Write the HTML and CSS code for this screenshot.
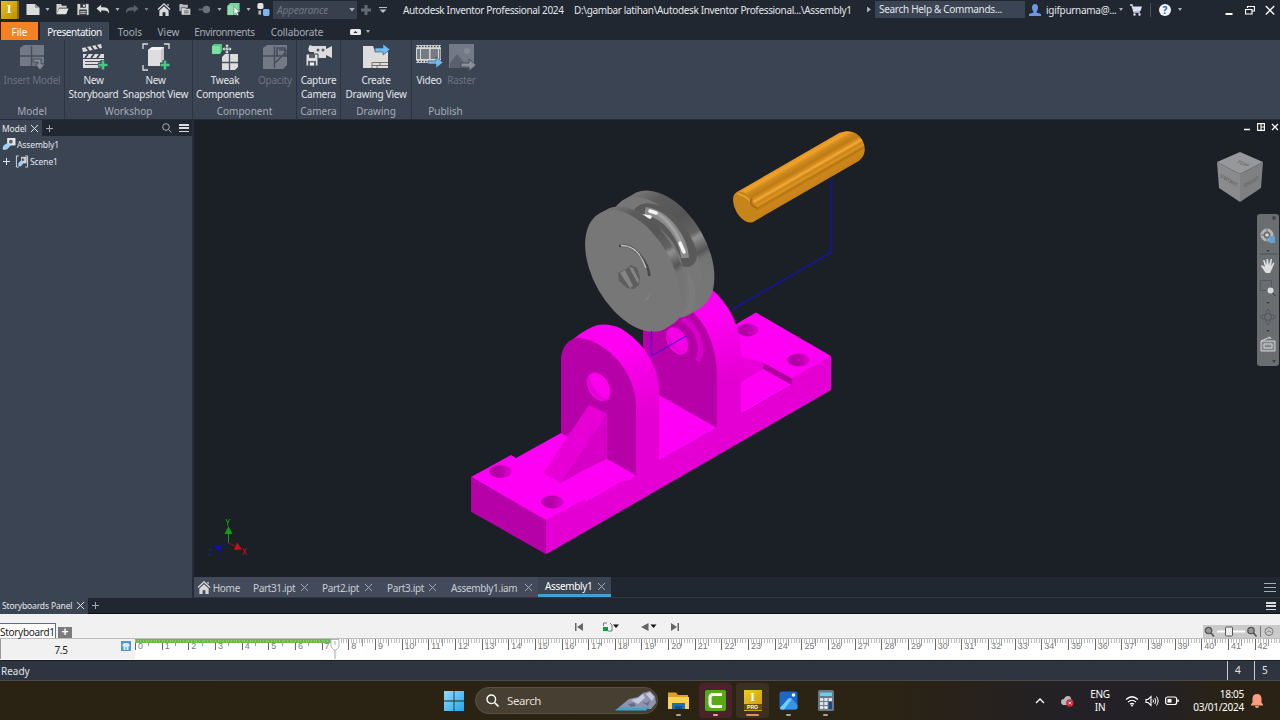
FILE: index.html
```html
<!DOCTYPE html>
<html lang="en">
<head>
    <meta charset="UTF-8">
    <meta name="viewport" content="width=device-width, initial-scale=1.0">
    <title>Autodesk Inventor Professional 2024</title>
    <link rel="stylesheet" href="styles.css">
</head>
<body>
    <!-- Title bar -->
    <header class="titlebar">
        <div class="logo">I</div>
        <div class="qat">
            <svg class="icon" viewBox="0 0 14 14"><path d="M0 1h9l5 4v8H0z" fill="#dcdcdc"/><path d="M9 1v4h5z" fill="#8b9099"/></svg>
            <i class="caret"></i>
            <svg class="icon" viewBox="0 0 14 14"><path d="M1 12V1h5l1 2h5v2H4z" fill="#cfcfcf"/><path d="M4 6h10l-2.500 6H1z" fill="#e2e2e2"/></svg>
            <svg class="icon wide" viewBox="0 0 14 14"><path d="M1 1h12v12H1z" fill="#d8d8d8"/><path d="M4 1h6v4H4zM3 7h8v6H3z" fill="#333a45"/><path d="M7 2h2v2H7zM4 8.500h6v1H4zm0 2h6v1H4z" fill="#e4e4e4"/></svg>
            <svg class="icon wide" viewBox="0 0 14 14"><path d="M0 6l5-4v2.500h3c4 0 6 3 5.500 7C12.500 9 11 8 8 8H5v2.500z" fill="#dcdcdc"/></svg>
            <i class="caret"></i>
            <svg class="icon" viewBox="0 0 14 14"><path d="M14 6L9 2v2.500H6c-4 0-6 3-5.500 7C1.500 9 3 8 6 8h3v2.500z" fill="#59606b"/></svg>
            <i class="caret dim"></i>
            <svg class="icon wide" viewBox="0 0 14 14"><path d="M7 0l7 6.500-1 1L7 2 1 7.500l-1-1zM10.500 1H12v2.500l-1.500-1z" fill="#d8d8d8"/><path d="M2 8l5-4.500L12 8v6H8.500v-4h-3v4H2z" fill="#d8d8d8"/></svg>
            <svg class="icon wide" viewBox="0 0 14 14"><path d="M1 1h3l1 1h5v3H4v4H1z" fill="#b9bdc2"/><path d="M3 5h4l1 1h5v7H3z" fill="#d3d3d3" stroke="#202731" stroke-width=".5"/><path d="M6 8.500h5M6 10.500h5" stroke="#555b66"/></svg>
            <svg class="icon wide" viewBox="0 0 14 14"><circle cx="8.500" cy="7" r="4" fill="#6b717b"/><path d="M0 7h5" stroke="#5a616c" stroke-width="2"/></svg>
            <i class="caret"></i>
            <svg class="icon" viewBox="0 0 14 14"><path d="M0 3l3-3h10v9l-3 4H0z" fill="#74d69a"/><path d="M0 3h10v10H0z" fill="#8de0ac"/><path d="M7 3.500v9l2-2 1.500 3 1.500-.7-1.500-3H13z" fill="#fff" stroke="#39414d" stroke-width=".5"/></svg>
            <i class="caret"></i>
            <svg class="icon" viewBox="0 0 14 14"><rect x="1" y="0" width="6.500" height="6.500" rx="2" fill="#e4e4e4"/><rect x="7" y="6.500" width="7" height="7.500" rx="1.500" fill="#79b6f2"/><path d="M2 8h3v4.500H2z" fill="#aeb3ba"/></svg>
        </div>
        <div class="appearance">Appearance<i class="caret"></i></div>
        <svg class="qat-plus" viewBox="0 0 10 10"><path d="M3.500 0h3v3.500H10v3H6.500V10h-3V6.500H0v-3h3.500z" fill="#636a76"/></svg>
        <svg class="qat-more" viewBox="0 0 8 8"><path d="M0 1.500h8" stroke="#b8bdc5"/><path d="M.500 3.500h7L4 7z" fill="#b8bdc5"/></svg>
        <div class="title">Autodesk Inventor Professional 2024</div>
        <div class="title path">D:\gambar latihan\Autodesk Inventor Professional...\Assembly1</div>
        <i class="arrow-right"></i>
        <div class="help-search">Search Help &amp; Commands...</div>
        <svg class="user-icon" viewBox="0 0 12 12"><path d="M3 3.500C3 1 4.500 0 6 0s3 1 3 3.500C9 6 8 7 7.500 7.500v1L12 10v2H0v-2l4.500-1.500v-1C4 7 3 6 3 3.500z" fill="#6f97e8"/></svg>
        <span class="user">igifpurnama@...</span>
        <i class="caret small"></i>
        <svg class="cart" viewBox="0 0 12 12"><path d="M0 1h2l2 7h6" stroke="#dde1f5" fill="none" stroke-width="1.300"/><path d="M2.500 2.500H12L10.500 7H4z" fill="#dde1f5"/><circle cx="4.500" cy="10.500" r="1.200" fill="#dde1f5"/><circle cx="9.500" cy="10.500" r="1.200" fill="#dde1f5"/></svg>
        <i class="divider"></i>
        <div class="help">?</div>
        <i class="caret small"></i>
        <div class="window-buttons">
            <svg viewBox="0 0 10 12"><path d="M1.500 10h7" stroke="#fff" stroke-width="2"/></svg>
            <svg viewBox="0 0 10 12"><path d="M2.500 4V2.500h7v4.500H7M.500 5.500h6.500v4.500H.500z" stroke="#fff" fill="none" stroke-width="1.200"/></svg>
            <svg viewBox="0 0 10 12"><path d="M.8 2l8.400 8.500M9.200 2L.8 10.500" stroke="#fff" stroke-width="1.300"/></svg>
        </div>
    </header>

    <!-- Ribbon tabs -->
    <nav class="ribbon-tabs">
        <span class="tab file">File</span>
        <span class="tab active">Presentation</span>
        <span class="tab tools">Tools</span>
        <span class="tab view">View</span>
        <span class="tab env">Environments</span>
        <span class="tab collab">Collaborate</span>
        <svg class="ribbon-toggle" viewBox="0 0 12 8"><rect y="1" width="11" height="6" rx="1.500" fill="#e8e8e8"/><path d="M3.500 5l2-2 2 2z" fill="#222"/></svg>
        <i class="caret small"></i>
    </nav>

    <!-- Ribbon -->
    <section class="ribbon">
        <div class="group g-model">
            <div class="buttons">
                <div class="button b-insert disabled">
                    <svg viewBox="0 0 28 28"><path d="M2 5l4-3h20v18l-4 3H2z" fill="#737a85"/><path d="M13.500 3v20M2 13h24" stroke="#474e5b" stroke-width="1.500"/><path d="M15 16h8v5h4l-5 6-5-6h3v-2h-5z" fill="#868c96" stroke="#474e5b"/></svg>
                    <span>Insert Model</span>
                </div>
            </div>
            <div class="group-name">Model</div>
        </div>
        <div class="group g-workshop">
            <div class="buttons">
                <div class="button b-story">
                    <svg viewBox="0 0 28 28"><path d="M2 5l19-4 1 4L3 9zM3 11h21v4H3z" fill="#ddd"/><path d="M6 4l3 4M11 3l3 4M16 2l3 4M8 11l-3 4M14 11l-3 4M20 11l-3 4" stroke="#3b4453" stroke-width="1.800"/><path d="M3 16h21v9H3z" fill="#ddd"/><path d="M5 18.500h17M5 21.500h17" stroke="#4c5360"/><path d="M18 22h10M23 17v10" stroke="#3b4453" stroke-width="5"/><path d="M18.500 22h9M23 17.500v9" stroke="#45c982" stroke-width="2.600"/></svg>
                    <span>New<br>Storyboard</span>
                </div>
                <div class="button b-snap">
                    <svg viewBox="0 0 28 28"><path d="M1 6V1h5M22 1h5v5M1 22v5h5" stroke="#ddd" fill="none" stroke-width="1.300"/><path d="M6 7l4-3h12v15l-3 4H6z" fill="#c6c6c6"/><path d="M6 7l4-3h12l-3 3z" fill="#f2f2f2"/><path d="M6 7h13v16H6z" fill="#dedede"/><path d="M18 22h10M23 17v10" stroke="#3b4453" stroke-width="5"/><path d="M18.500 22h9M23 17.500v9" stroke="#45c982" stroke-width="2.600"/></svg>
                    <span>New<br>Snapshot View</span>
                </div>
            </div>
            <div class="group-name">Workshop</div>
        </div>
        <div class="group g-component">
            <div class="buttons">
                <div class="button b-tweak">
                    <svg viewBox="0 0 28 28"><path d="M1 3l2-2h8v7l-2 3H1z" fill="#55c985"/><path d="M1 3h8v8H1z" fill="#7ce0a2"/><path d="M12 6h8M16 2v8" stroke="#e4e4e4" stroke-width="1.200"/><path d="M11.500 6l2-2v4zM20.500 6l-2-2v4zM16 1.200l2 2h-4zM16 10.800l2-2h-4z" fill="#e4e4e4"/><path d="M11 14l3-3h13v13l-3 3H11z" fill="#ddd"/><path d="M18.500 11v16M11 19.500h16" stroke="#4c5360" stroke-width="1.300"/></svg>
                    <span>Tweak<br>Components</span>
                </div>
                <div class="button b-opacity disabled">
                    <svg viewBox="0 0 28 28"><path d="M2 5l4-3h20v20l-4 4H2z" fill="#737a85"/><path d="M13.500 3v22M2 13h24M16 5h8v8h-8zM18 7h7v7M14 20l10-10" stroke="#474e5b" fill="none" stroke-width="1.500"/></svg>
                    <span>Opacity</span>
                </div>
            </div>
            <div class="group-name">Component</div>
        </div>
        <div class="group g-camera">
            <div class="buttons">
                <div class="button b-capture">
                    <svg viewBox="0 0 28 28"><path d="M4 4c0-2 2-2 3-1h14v3l6-3v12l-6-3v3H9V9H5C3 8 3 6 4 4z" fill="#ddd"/><circle cx="13" cy="7" r="1.500" fill="#59606c"/><circle cx="18" cy="7" r="1.500" fill="#59606c"/><path d="M1 11h12v12H1z" fill="#ddd" stroke="#3b4453"/><path d="M4 11h6v4H4zM3 18h8v5H3z" fill="#59606c"/><path d="M5 19.500h4v3H5z" fill="#eee"/></svg>
                    <span>Capture<br>Camera</span>
                </div>
            </div>
            <div class="group-name">Camera</div>
        </div>
        <div class="group g-drawing">
            <div class="buttons">
                <div class="button b-drawing">
                    <svg viewBox="0 0 28 28"><path d="M1 3h10l2 5h13v17H1z" fill="#ddd"/><path d="M10 19.500h16M10 19.500V25M10 22.500h16M18 19.500v3M15 22.500V25" stroke="#7b6f66" fill="none"/><path d="M13 5h8V1l7 5.500-7 5.500V9h-8z" fill="#6ebcf5" stroke="#3b4453" stroke-width=".6"/></svg>
                    <span>Create<br>Drawing View</span>
                </div>
            </div>
            <div class="group-name">Drawing</div>
        </div>
        <div class="group g-publish">
            <div class="buttons">
                <div class="button b-video">
                    <svg viewBox="0 0 28 28"><path d="M1 2h25v18H1z" fill="#d6d6d6"/><path d="M1 3.500h25M1 18.500h25" stroke="#3b4453" stroke-width="1.400" stroke-dasharray="1.500 1.500"/><path d="M2 6h3v10H2zM6 6h8v10H6zM15.500 6H23v10h-7.500zM24 6h1.500v10H24z" fill="#767b84"/><path d="M13 18h8v-4l7 5.500-7 5.500v-4h-8z" fill="#6ebcf5" stroke="#3b4453" stroke-width=".6"/></svg>
                    <span>Video</span>
                </div>
                <div class="button b-raster disabled">
                    <svg viewBox="0 0 28 28"><path d="M1 1h25v24H1z" fill="#737a85"/><path d="M2 20l7-9 8 10v4H2z" fill="#5a616d"/><circle cx="19" cy="8" r="3" fill="#858b95"/><path d="M13 20h8v-4l7 6-7 6v-4h-8z" fill="#8b919b" stroke="#474e5b"/></svg>
                    <span>Raster</span>
                </div>
            </div>
            <div class="group-name">Publish</div>
        </div>
    </section>

    <main class="workspace">
        <!-- Model browser -->
        <aside class="browser">
            <div class="panel-head">
                <span class="panel-tab">Model <b class="x"></b></span>
                <b class="plus"></b>
                <svg class="search-icon" viewBox="0 0 10 10"><circle cx="4" cy="4" r="3.300" fill="none" stroke="#a7adb7"/><path d="M6.500 6.500L9.500 9.500" stroke="#a7adb7"/></svg>
                <b class="menu"></b>
            </div>
            <div class="tree-row">
                <svg class="node" viewBox="0 0 14 14"><path d="M5 0h9v8H5z" fill="#e4e4e4"/><circle cx="9" cy="4" r="2" fill="#59606c"/><path d="M1 8l5-3 3 3-4 4-3 1-2-1z" fill="#9ed2f5"/></svg>
                Assembly1
            </div>
            <div class="tree-row child">
                <b class="plus"></b>
                <svg class="node" viewBox="0 0 14 14"><path d="M3.500 1H1v12h2.500M10.500 1H13v12h-2.500" stroke="#ddd" fill="none"/><path d="M6 2h6v7H6z" fill="#d4d4d4"/><circle cx="8" cy="5" r="1.500" fill="#59606c"/><path d="M3 9l3-3 3 2-3 4H3z" fill="#9ed2f5"/></svg>
                Scene1
            </div>
        </aside>

        <div class="viewport">
            <div class="canvas">
                <svg class="scene" viewBox="194 120 1086 457">
                    <defs>
                        <linearGradient id="band" gradientUnits="userSpaceOnUse" x1="600" y1="325" x2="655" y2="410">
                            <stop offset=".35" stop-color="#ff00f2"/><stop offset="1" stop-color="#e400d2"/>
                        </linearGradient>
                        <linearGradient id="band2" gradientUnits="userSpaceOnUse" x1="700" y1="290" x2="740" y2="375">
                            <stop offset=".35" stop-color="#ff00f2"/><stop offset="1" stop-color="#e400d2"/>
                        </linearGradient>
                        <linearGradient id="hole">
                            <stop offset="0" stop-color="#b000a4"/><stop offset=".45" stop-color="#b400a8"/><stop offset="1" stop-color="#e000d0"/>
                        </linearGradient>
                        <linearGradient id="pin" x1="0" y1="0" x2="0" y2="1">
                            <stop offset="0" stop-color="#e2951e"/><stop offset=".1" stop-color="#f0a32a"/><stop offset=".2" stop-color="#d08a1d"/>
                            <stop offset=".34" stop-color="#bd7b17"/><stop offset=".44" stop-color="#d8901f"/><stop offset=".5" stop-color="#f5ac36"/>
                            <stop offset=".57" stop-color="#c9841b"/><stop offset=".66" stop-color="#dc931f"/><stop offset=".72" stop-color="#b47413"/><stop offset=".8" stop-color="#cd861a"/><stop offset="1" stop-color="#c58119"/>
                        </linearGradient>
                        <linearGradient id="rim" x1="0" y1="0" x2="0" y2="1">
                            <stop offset="0" stop-color="#777"/><stop offset=".12" stop-color="#5c5c5c"/><stop offset=".33" stop-color="#555"/>
                            <stop offset=".48" stop-color="#626262"/><stop offset=".52" stop-color="#919191"/><stop offset=".57" stop-color="#747474"/><stop offset=".63" stop-color="#565656"/>
                            <stop offset=".68" stop-color="#747474"/><stop offset="1" stop-color="#777"/>
                        </linearGradient>
                    </defs>

                    <!-- base -->
                    <path d="M471 477l40-22 5 3 45-25 182-113 13-7.500 75 43.500-39 29-207 118-39 18z" fill="#ff00f4"/>
                    <path d="M471 476.700l75 43.300v34.300l-75-42.600z" fill="#b600a8"/>
                    <path d="M546 520l39-21v3.500L792 385v-7l39-22v34L546 554.300z" fill="#e400d2"/>
                    <path d="M741 334l0 0 22 28v7L741 382z" fill="#ff00f4"/>
                    <path d="M741 357l22 5v7L741 382z" fill="#e800d8"/>
                    <path d="M763 362.500l29 16v6.500l-29-16z" fill="#ad009f"/>
                    <ellipse cx="500.500" cy="471.500" rx="11.300" ry="6.500" fill="url(#hole)"/>
                    <ellipse cx="552.500" cy="502" rx="11.300" ry="6.500" fill="url(#hole)"/>
                    <ellipse cx="747.500" cy="330" rx="11" ry="6.500" fill="url(#hole)"/>
                    <ellipse cx="798.500" cy="360" rx="11.300" ry="6.500" fill="url(#hole)"/>

                    <!-- rear bracket -->
                    <path d="M655 311C670 300 690 290 700 287C712 285 720 297 728 308C736 321 741 335 741 357V415L717 429z" fill="url(#band2)"/>
                    <path d="M643 348V325C646 308 668 300 688 308C707 322 717 349 717 377V428L659 395L643 385z" fill="#b600a8"/>
                    <path d="M682 319C699 328 704 348 698 361" stroke="#d800ca" stroke-width="5" fill="none"/>
                    <ellipse cx="679" cy="341" rx="20" ry="14" transform="rotate(60 679 341)" fill="#b200a4"/>
                    <ellipse cx="677" cy="341" rx="14.800" ry="9.600" transform="rotate(60 677 341)" fill="#f400e6"/>
                    <path d="M666 331C670 340 678 352 686 353C678 357 666 344 666 331z" fill="#e400d4"/>

                    <!-- front bracket -->
                    <path d="M561 362C561 345 580 333 592 327C600 323 611 324 620 328C644 342 659 367 659 392V463L636 476L561 433z" fill="url(#band)"/>
                    <path d="M561 362C561 346 569 337.500 580 338C608 341 636 374 636 405V475.500L607 459L561 433z" fill="#b600a8"/>
                    <ellipse cx="598.500" cy="386.700" rx="15.300" ry="10.300" transform="rotate(60 598.500 386.700)" fill="#fa00ec"/>
                    <path d="M589 374C590 385 598 397 609 400C600 404 585 391 588 377z" fill="#e400d4"/>

                    <!-- rib -->
                    <path d="M589 405l18 9-47 69-17-10z" fill="#e600d6"/>
                    <path d="M607 414v45l-47 24z" fill="#d600c6"/>
                    <path d="M607 459l29 16.500-9 5.500-51-7z" fill="#ff00f4"/>

                    <!-- pulley: rear disc along its own axis -->
                    <g transform="translate(632.500 271) rotate(-30)">
                        <path d="M27 -66H40A39 66 0 0 1 40 66H27z" fill="url(#rim)"/>
                        <ellipse cx="27" rx="38.500" ry="66" fill="#777"/>
                        <path d="M9 -63Q17 -55 22 -60L30 40L22 62L9 64z" fill="#747474"/>
                        <path d="M18 64Q35 60 48 25Q50 51 30 65z" fill="#7b7b7b"/>
                    </g>
                    <!-- groove -->
                    <path d="M634 210C640 201 655 201 667 210C682 222 697 242 697 256C696 264 691 269 682 266C680 245 661 222 634 218z" fill="#595959"/>
                    <path d="M645 211C668 214 684 240 685 258" fill="none" stroke="#8a8a8a" stroke-width="8"/>
                    <path d="M652 211C669 218 681 238 683 252" fill="none" stroke="#a2a2a2" stroke-width="3"/>
                    <path d="M643 216l7 1M650 211l6 2M680 243l4 9" stroke="#f4f4f4" stroke-width="3.500" stroke-linecap="round"/>
                    <!-- front disc -->
                    <g transform="translate(632.500 271) rotate(-30)">
                        <path d="M0 -66H8A39 66 0 0 1 8 66H0z" fill="url(#rim)"/>
                        <ellipse rx="39" ry="66.500" fill="#777"/>
                    </g>
                    <path d="M619 246C634 242 648 262 649.500 276" fill="none" stroke="#484848" stroke-width="2.500"/>
                    <path d="M621 245.500C634 245 642 256 646 268" fill="none" stroke="#c8c8c8" stroke-width="1.300"/>
                    <path d="M618 273l8-4 5-4 6 3 3 9-1 8-5 4-7-1-8-7z" fill="#5e5e5e"/>
                    <path d="M620 273l5-3 8 16-3 2zM629 267l4 1 6 12-1 4z" fill="#858585"/>
                    <path d="M644 301l7-8-3 7z" fill="#828282"/>

                    <!-- pin -->
                    <g transform="translate(745 207) rotate(-30)">
                        <path d="M0 -17H119C131 -15 135 -7 135 0C135 8 131 16 121 17H0z" fill="url(#pin)"/>
                        <ellipse rx="9.800" ry="17" fill="#c6841b"/>
                        <path d="M1 -14Q7 -8 8 0M0 -16l6 8" stroke="#f0a52d" fill="none" stroke-width="1.500"/>
                        <path d="M10 -4Q4 0 10 7" stroke="#a96c12" fill="none" stroke-width="2"/>
                    </g>

                    <!-- explosion trails -->
                    <path d="M831 177V252.500L733 309" fill="none" stroke="#1515a0" stroke-width="1.500"/>
                    <path d="M651.500 331V356L686 336" fill="none" stroke="#5a00d0" stroke-width="1.200"/>

                    <!-- axis triad -->
                    <path d="M228.500 543V532" stroke="#12a012"/><path d="M224.500 534l4-8 4 8z" fill="#149a14"/>
                    <path d="M228.500 543l9 4" stroke="#a01010"/><path d="M237 542.500l5 7-8 .5z" fill="#c01414"/>
                    <path d="M228.500 543l-10 4" stroke="#1414a0"/><path d="M214 546l8-1-2 7z" fill="#1010b0"/>
                    <text class="axis" x="225.500" y="525.500" fill="#18b018">Y</text>
                    <text class="axis" x="242" y="555" fill="#c81414">X</text>
                    <text class="axis" x="208" y="555.500" fill="#1818a8">Z</text>
                </svg>

                <div class="view-buttons">
                    <svg viewBox="0 0 8 8"><path d="M1 6.500h6" stroke="#fff" stroke-width="1.500"/></svg>
                    <svg viewBox="0 0 8 8"><path d="M.600.600h6.800v6.800H.600zM4 .6v7M4 4h3.400" stroke="#fff" fill="none" stroke-width="1.100"/></svg>
                    <svg viewBox="0 0 8 8"><path d="M1 1l6 6M7 1L1 7" stroke="#fff" stroke-width="1.200"/></svg>
                </div>

                <svg class="viewcube" viewBox="0 0 48 52">
                    <path d="M24 1L47 11 24 23 1 11z" fill="#97989a"/>
                    <path d="M1 11l23 12v28L3 37z" fill="#8a8b8d"/>
                    <path d="M47 11L24 23v28l21-14z" fill="#7f8082"/>
                    <text transform="matrix(.8 .45 0 1 5 27)">FRONT</text>
                    <text transform="matrix(.8 -.45 0 1 28 37)">RIGHT</text>
                    <text transform="matrix(.85 .4 -.8 .45 20 11)">TOP</text>
                </svg>

                <div class="navbar">
                    <svg viewBox="0 0 22 152">
                        <circle cx="17" cy="4" r="2" fill="#45484c"/>
                        <circle cx="10" cy="21" r="5" fill="none" stroke="#b4b6b8" stroke-width="3"/><circle cx="10" cy="21" r="1.800" fill="#d5d5d5"/><path d="M10 15v3M10 24v3M4 21h3" stroke="#6b6e71"/><rect x="12" y="22" width="6" height="7" rx="1" fill="#5fa3d6"/>
                        <path d="M3 40h17" stroke="#4d5054"/>
                        <path d="M8 58l-4-6 1-1 3 2-2-7h1.500l2 5V45h1.500l1 6 1.500-6H15l-.8 7 2-3.500 1.300.5-3 7-1.500 3H9z" fill="#dedede"/>
                        <path d="M3.500 66.500h11v10h-11z" fill="none" stroke="#55585c"/><circle cx="13.500" cy="76.500" r="3" fill="#dcdcdc"/><path d="M15.500 79l3 3" stroke="#333"/>
                        <path d="M11 95l2 3v3h3l3 2-3 2h-3v3l-2 3-2-3v-3H6l-3-2 3-2h3v-3z" fill="none" stroke="#55585c"/><circle cx="11" cy="103" r="3.500" fill="none" stroke="#55585c"/>
                        <path d="M4 127h14v10H4zM4 127l9-4 1 2" fill="#85888b" stroke="#d3d3d3"/><path d="M7 130h8v4H7z" fill="none" stroke="#d3d3d3"/>
                        <path d="M9 36h4l-2 2zM9 88h4l-2 2zM9 116h4l-2 2zM15 146h4l-2 3z" fill="#3f4246"/>
                    </svg>
                </div>
            </div>

            <!-- Document tabs -->
            <div class="doc-tabs">
                <div class="doc home">
                    <svg viewBox="0 0 14 14"><path d="M7 0l7 6.500-1 1L7 2 1 7.500l-1-1zM10.500 1H12v2.500l-1.500-1z" fill="#d8d8d8"/><path d="M2 8l5-4.500L12 8v6H8.500v-4h-3v4H2z" fill="#d8d8d8"/></svg>
                    <span>Home</span>
                </div>
                <div class="doc d1">Part31.ipt<b class="x"></b></div>
                <div class="doc d2">Part2.ipt<b class="x"></b></div>
                <div class="doc d3">Part3.ipt<b class="x"></b></div>
                <div class="doc d4">Assembly1.iam<b class="x"></b></div>
                <div class="doc current">Assembly1<b class="x"></b></div>
                <b class="menu"></b>
            </div>
        </div>
    </main>

    <!-- Storyboards panel -->
    <section class="storyboards">
        <div class="panel-head">
            <span class="panel-tab">Storyboards Panel <b class="x"></b></span>
            <b class="plus"></b>
            <b class="menu"></b>
        </div>
        <div class="story-tools">
            <span class="story-tab">Storyboard1</span>
            <span class="story-add">+</span>
            <div class="playback">
                <svg class="p-first" viewBox="0 0 10 10"><path d="M1 1h1.500v8H1zM9 1v8L3 5z" fill="#666"/></svg>
                <svg class="p-play" viewBox="0 0 17 10"><path d="M1.500 4V1H5M8 1l2 2v6H6" stroke="#777" fill="none"/><path d="M1 5h5v4H1z" fill="#159a45"/><path d="M11 2.500h6L14 6z" fill="#111"/></svg>
                <svg class="p-back" viewBox="0 0 17 10"><path d="M8.500 1v8L1 5z" fill="#666"/><path d="M10.500 2.500h6l-3 3.500z" fill="#111"/></svg>
                <svg class="p-last" viewBox="0 0 10 10"><path d="M1 1l6 4-6 4zM7.500 1H9v8H7.500z" fill="#666"/></svg>
            </div>
            <div class="zoom-bar">
                <svg viewBox="0 0 77 13">
                    <circle cx="5.500" cy="5.500" r="3.200" fill="#999" stroke="#555" stroke-width="1.300"/><path d="M8 8l3 3.500" stroke="#555" stroke-width="1.700"/>
                    <path d="M14 6.500h28" stroke="#fff" stroke-width="2"/><rect x="22.500" y="2" width="7" height="9" rx="1" fill="#eee" stroke="#555"/>
                    <circle cx="48" cy="5.500" r="3.200" fill="#999" stroke="#555" stroke-width="1.300"/><path d="M50.500 8l3 3.500" stroke="#555" stroke-width="1.700"/>
                    <path d="M57.500 1v11" stroke="#777"/><circle cx="66" cy="6.500" r="4" fill="none" stroke="#777"/><path d="M64 7.500l2-2 2 2" stroke="#777" fill="none"/>
                </svg>
            </div>
        </div>
        <div class="timeline">
            <div class="time">7.5</div>
            <div class="time-icon"><svg viewBox="0 0 10 11"><path d="M0 0h10v10H0z" fill="#4f98cf"/><path d="M1.500 5.500V3.500L3 2h4l1.500 1.500v2H7.500V9h-5V5.500z" fill="#dceaf5"/><path d="M4 6h2v3H4z" fill="#8fbde0"/></svg></div>
            <div class="ruler">
                <div class="played"></div>
                <svg class="playhead" viewBox="0 0 10 20"><path d="M1 .5h8V8L6 11H4L1 8z" fill="#fff" stroke="#b5b5b5"/><path d="M5 11v9M5 2v4" stroke="#aaa"/></svg>
                <span>0</span><span>1</span><span>2</span><span>3</span><span>4</span><span>5</span><span>6</span><span>7</span>
                <span>8</span><span>9</span><span>10</span><span>11</span><span>12</span><span>13</span><span>14</span><span>15</span>
                <span>16</span><span>17</span><span>18</span><span>19</span><span>20</span><span>21</span><span>22</span><span>23</span>
                <span>24</span><span>25</span><span>26</span><span>27</span><span>28</span><span>29</span><span>30</span><span>31</span>
                <span>32</span><span>33</span><span>34</span><span>35</span><span>36</span><span>37</span><span>38</span><span>39</span>
                <span>40</span><span>41</span><span>42</span>
            </div>
        </div>
    </section>

    <footer class="status">
        <span class="ready">Ready</span>
        <span class="count">4</span>
        <span class="count">5</span>
    </footer>

    <!-- Windows taskbar -->
    <div class="taskbar">
        <svg class="start" viewBox="0 0 20 20"><defs><linearGradient id="win" x1="0" y1="0" x2="1" y2="1"><stop offset="0" stop-color="#8fdcff"/><stop offset="1" stop-color="#22a5ee"/></linearGradient></defs><path d="M0 0h9.600v9.600H0zM10.400 0H20v9.600h-9.600zM0 10.400h9.600V20H0zM10.400 10.400H20V20h-9.600z" fill="url(#win)"/></svg>
        <div class="task-search">
            <svg class="glass" viewBox="0 0 13 13"><circle cx="5.300" cy="5.300" r="4.300" fill="none" stroke="#fff" stroke-width="1.400"/><path d="M8.500 8.500l4 4" stroke="#fff" stroke-width="1.600"/></svg>
            <span>Search</span>
            <svg class="art" viewBox="0 0 42 20"><path d="M3 17L14 8l9-2 5-4 7-2 5 5 1 7-5 6z" fill="#8e94ad"/><path d="M16 9l7-2 5-4 2 4-7 6zM31 3l4-2 4 5-2 4z" fill="#c6cadd"/><path d="M13 13l6-1 2 3-5 1zM27 11l5 1 3-3-2 6z" fill="#666c88"/><path d="M0 19c6-4 12-3 18-2s10-1 16-1l-3 3.500H2z" fill="#3ea6cf"/></svg>
        </div>
        <div class="app a-explorer"><svg viewBox="0 0 21 21"><path d="M0 2.500h8l2 2.500h10v14H0z" fill="#e0a020"/><path d="M0 7h21v12H0z" fill="#fbd15b"/><path d="M4 13h13v6H4z" fill="#1b6fb5"/><path d="M7 16h7v3H7z" fill="#104f8a"/></svg><i></i></div>
        <div class="app a-camtasia"><svg viewBox="0 0 21 21"><rect width="21" height="21" rx="2" fill="#59a916"/><path d="M17 4.500H8Q5 4.500 5 7.500v6q0 3 3 3h9" fill="none" stroke="#fff" stroke-width="3"/></svg><i></i></div>
        <div class="app a-inventor"><div class="inv">I<small>PRO</small></div><i></i></div>
        <div class="app a-photos"><svg viewBox="0 0 21 21"><rect x="1.500" y="1.500" width="18" height="18" rx="2.500" fill="#1f66c7"/><path d="M2 18l8-9q2-2 4 0l5.500 6v2q0 2.500-2.500 2.500H4q-2 0-2-1.500z" fill="#3593e8"/><path d="M2 18l8-9q2-2 4 0L6 19.500H4q-2 0-2-1.500z" fill="#6fcdf9"/><circle cx="15.500" cy="5" r="1.800" fill="#fff"/></svg><i></i></div>
        <div class="app a-calc"><svg viewBox="0 0 21 21"><rect x="3" y="0" width="16" height="21" rx="1.500" fill="#6d7885"/><path d="M5 2.500h12v3.500H5z" fill="#5ed3f5"/><path d="M5 8h3.300v3H5zM9.300 8h3.300v3H9.300zM13.600 8H17v3h-3.400zM5 12h3.300v3H5zM9.300 12h3.300v3H9.300zM5 16h3.300v3H5zM9.300 16h3.300v3H9.300z" fill="#dfe5ea"/><path d="M13.600 12H17v7h-3.400z" fill="#164b88"/></svg><i></i></div>

        <div class="tray">
            <svg class="t-up" viewBox="0 0 10 6"><path d="M1 5l4-4 4 4" stroke="#fff" fill="none" stroke-width="1.300"/></svg>
            <svg class="t-cloud" viewBox="0 0 14 12"><path d="M1 7q0-3 3-3 1-3 4-3t3 3q2 1 1 4l-3 2H3Q1 9 1 7z" fill="#b9b9b9"/><circle cx="9.800" cy="8" r="3.700" fill="#d42a34"/><path d="M8.500 6.700l2.600 2.600M11.100 6.700L8.500 9.300" stroke="#fff"/></svg>
            <div class="lang">ENG<br>IN</div>
            <svg class="t-wifi" viewBox="0 0 14 12"><path d="M1 4.500q6-5.500 12 0M3 7q4-3.500 8 0M5 9.200q2-1.800 4 0" stroke="#fff" fill="none" stroke-width="1.200"/><circle cx="7" cy="10.500" r="1" fill="#fff"/></svg>
            <svg class="t-sound" viewBox="0 0 14 12"><path d="M1 4.500h2L6 1.500v9L3 7.500H1z" fill="none" stroke="#fff" stroke-width="1.100"/><path d="M8 4.500q1 1.500 0 3M9.800 3q2 3 0 6M11.500 1.500q3.200 4.500 0 9" stroke="#fff" fill="none"/></svg>
            <svg class="t-batt" viewBox="0 0 14 10"><rect x=".600" y="1" width="11" height="7.500" rx="2" fill="none" stroke="#fff" stroke-width="1.200"/><path d="M2.500 3h4v3.600h-4z" fill="#fff"/><path d="M13 3.500v2.500" stroke="#fff" stroke-width="1.500"/></svg>
            <div class="clock">18:05<br>03/01/2024</div>
            <svg class="t-bell" viewBox="0 0 12 14"><path d="M6 0q4.500 0 4.500 5v3.500L12 10.500v1H0v-1l1.500-2V5Q1.500 0 6 0zM4 12h4q0 2-2 2t-2-2z" fill="#fb9b80"/></svg>
        </div>
    </div>
</body>
</html>
```

FILE: styles.css
```css
* {
    margin: 0;
    padding: 0;
    box-sizing: border-box;
}

body {
    width: 1280px;
    height: 720px;
    overflow: hidden;
    display: flex;
    flex-direction: column;
    background: #202731;
    color: #e3e6ea;
    font-family: "Noto Sans", "Open Sans", sans-serif;
    font-size: 10px;
    white-space: nowrap;
}

svg {
    display: block;
    flex: none;
}

/* small shared glyphs */
.caret {
    flex: none;
    width: 8px;
    height: 3px;
    background: #aab0b9;
    clip-path: polygon(25% 0, 75% 0, 50% 100%);
}

.caret.dim {
    background: #767d88;
}

.x {
    flex: none;
    width: 7px;
    height: 7px;
    background:
        linear-gradient(45deg, transparent 44%, currentColor 44% 56%, transparent 56%),
        linear-gradient(-45deg, transparent 44%, currentColor 44% 56%, transparent 56%);
}

.plus {
    flex: none;
    width: 7px;
    height: 7px;
    background:
        linear-gradient(#a3a9b3, #a3a9b3) center / 7px 1px no-repeat,
        linear-gradient(#a3a9b3, #a3a9b3) center / 1px 7px no-repeat;
}

.menu {
    flex: none;
    width: 10px;
    height: 8px;
    margin-left: auto;
    background: repeating-linear-gradient(#d9dce1 0 1.5px, transparent 1.5px 3.3px);
}

/* title bar */
.titlebar {
    height: 22px;
    display: flex;
    align-items: center;
    padding-bottom: 3px;
}

.logo {
    width: 18px;
    height: 18px;
    margin-left: 1px;
    background: linear-gradient(135deg, #e6bd22, #bd9108);
    border-right: 2px solid #8a6a05;
    color: #fff;
    font: bold 12px/17px "Liberation Serif", serif;
    text-align: center;
}

.qat {
    display: flex;
    align-items: center;
    gap: 3.5px;
    margin-left: 7px;
}

.icon {
    width: 14px;
    height: 13px;
}

.icon.wide {
    margin-left: 3px;
}

.appearance {
    display: flex;
    align-items: center;
    justify-content: space-between;
    width: 84px;
    height: 18px;
    margin-left: 3px;
    padding: 0 1px 0 4px;
    background: #38404e;
    color: #707783;
    font-style: italic;
    letter-spacing: -0.15px;
}

.appearance .caret {
    height: 4px;
    clip-path: polygon(10% 0, 90% 0, 50% 100%);
}

.qat-plus {
    width: 10px;
    height: 10px;
    margin-left: 4px;
}

.qat-more {
    width: 8px;
    height: 8px;
    margin-left: 8px;
}

.title {
    width: 160px;
    margin-left: 16px;
    padding-top: 1px;
    font-size: 10px;
    letter-spacing: -0.35px;
}

.title.path {
    width: 279px;
    margin-left: 11px;
}

.arrow-right {
    width: 4px;
    height: 6px;
    margin-left: 14px;
    background: #a9afb8;
    clip-path: polygon(0 0, 100% 50%, 0 100%);
}

.help-search {
    width: 150px;
    height: 17px;
    margin-left: 4px;
    padding-left: 4px;
    background: #3b4453;
    line-height: 17px;
    letter-spacing: -0.3px;
}

.user-icon {
    width: 12px;
    height: 12px;
    margin-left: 4px;
}

.user {
    width: 71px;
    margin-left: 5px;
    letter-spacing: -0.3px;
}

.cart {
    width: 12px;
    height: 12px;
    margin-left: 5px;
}

.divider {
    width: 1px;
    height: 14px;
    margin-left: 8px;
    background: #4b525e;
}

.help {
    width: 12px;
    height: 12px;
    margin-left: 8px;
    border-radius: 50%;
    background: #f4f6ff;
    color: #2460c0;
    font-weight: bold;
    line-height: 12px;
    text-align: center;
}

.help + .caret {
    margin-left: 5px;
}

.window-buttons {
    display: flex;
    gap: 10.5px;
    margin: 0 5px 0 auto;
}

.window-buttons svg {
    width: 10px;
    height: 12px;
}

/* ribbon tabs */
.ribbon-tabs {
    height: 18px;
    display: flex;
    align-items: center;
    color: #a6adb8;
}

.tab {
    height: 18px;
    line-height: 20px;
    text-align: center;
}

.tab.file {
    width: 37px;
    margin-left: 1px;
    background: #f58220;
    color: #fff;
}

.tab.active {
    width: 69px;
    margin-left: 2px;
    background: #3b4453;
    color: #f4f5f7;
    letter-spacing: -0.45px;
}

.tab.tools {
    width: 42px;
}

.tab.view {
    width: 35px;
}

.tab.env {
    width: 77px;
    letter-spacing: -0.4px;
}

.tab.collab {
    width: 68px;
    letter-spacing: -0.15px;
}

.ribbon-toggle {
    width: 12px;
    height: 8px;
    margin: 1px 0 0 19px;
}

.ribbon-toggle + .caret {
    margin: 1px 0 0 2px;
}

/* ribbon */
.ribbon {
    height: 80px;
    display: flex;
    background: #3b4453;
    border-bottom: 1px solid #262d38;
}

.group {
    display: flex;
    flex-direction: column;
    justify-content: space-between;
    padding-bottom: 1px;
    border-right: 1px solid #2c3440;
}

.buttons {
    display: flex;
}

.button {
    padding-top: 3px;
    text-align: center;
    line-height: 13.5px;
    letter-spacing: -0.25px;
}

.button svg {
    width: 28px;
    height: 28px;
    margin: 0 auto 3px;
}

.button.disabled {
    color: #6c7380;
}

.group-name {
    color: #a6adb8;
    text-align: center;
    line-height: 13px;
}

.g-model { width: 65px; }
.g-workshop { width: 128px; }
.g-component { width: 104px; }
.g-camera { width: 44px; }
.g-drawing { width: 71px; }
.g-publish { width: 67px; border-right: none; }

.b-insert { width: 64px; }
.b-story { width: 57px; }
.b-snap { width: 67px; }
.b-tweak { width: 64px; }
.b-opacity { width: 36px; }
.b-capture { width: 43px; }
.b-drawing { width: 70px; }
.b-video { width: 34px; }
.b-raster { width: 31px; }

/* model browser */
.workspace {
    height: 478px;
    display: flex;
}

.browser {
    width: 194px;
    background: #3b4453;
    border-right: 2px solid #262d38;
}

.panel-head {
    height: 16px;
    display: flex;
    align-items: center;
    background: #202731;
    font-size: 8.5px;
    letter-spacing: -0.15px;
}

.panel-tab {
    height: 16px;
    display: flex;
    align-items: center;
    gap: 5px;
    padding: 0 4px 0 2px;
    background: #3b4453;
}

.panel-head .plus {
    margin-left: 4px;
}

.search-icon {
    width: 10px;
    height: 10px;
    margin-left: auto;
}

.browser .menu {
    margin: 0 3px 0 7px;
}

.tree-row {
    display: flex;
    align-items: center;
    height: 17px;
    padding-left: 2px;
    gap: 1px;
    font-size: 8.5px;
    letter-spacing: -0.1px;
}

.tree-row.child {
    padding-left: 3px;
}

.tree-row .plus {
    filter: brightness(1.4);
    margin-right: 4px;
}

.node {
    width: 14px;
    height: 13px;
}

/* graphics window */
.viewport {
    flex: 1;
    display: flex;
    flex-direction: column;
}

.canvas {
    position: relative;
    height: 457px;
    background: #1b1f26;
}

.scene {
    width: 1086px;
    height: 457px;
}

.axis {
    font: 8px "Noto Sans", sans-serif;
}

.view-buttons {
    position: absolute;
    top: 3px;
    right: 1px;
    display: flex;
    gap: 6px;
}

.view-buttons svg {
    width: 8px;
    height: 8px;
}

.viewcube {
    position: absolute;
    top: 31px;
    right: 16px;
    width: 48px;
    height: 52px;
}

.viewcube text {
    font: bold 6px "Liberation Sans", sans-serif;
    fill: #66686b;
}

.navbar {
    position: absolute;
    top: 94px;
    right: 1px;
    width: 22px;
    height: 152px;
    border-radius: 3px;
    background: #6b6e71;
}

/* document tabs */
.doc-tabs {
    height: 21px;
    display: flex;
    align-items: flex-start;
    padding-right: 4px;
    border-bottom: 1px solid #2f3743;
    color: #c9cdd4;
}

.doc {
    height: 20px;
    display: flex;
    align-items: center;
    justify-content: space-between;
    padding: 1px 6px 0 0;
    background: #434b5b;
    letter-spacing: -0.35px;
}

.doc .x {
    color: #a3a9b3;
}

.home {
    width: 54px;
    padding: 1px 8px 0 3px;
    letter-spacing: -0.3px;
}

.home svg {
    width: 14px;
    height: 13px;
}

.d1 { width: 66px; padding-left: 5px; }
.d2 { width: 64px; padding-left: 8px; }
.d3 { width: 64px; padding-left: 9px; }
.d4 { width: 96px; padding-left: 9px; }

.doc.current {
    width: 73px;
    padding-left: 7px;
    background: #3b4453;
    border-bottom: 3px solid #3ea2d4;
    color: #fff;
}

.doc-tabs .menu {
    width: 12px;
    height: 10px;
    margin-top: 6px;
    background: repeating-linear-gradient(#a7adb7 0 1px, transparent 1px 4px);
}

/* storyboards panel */
.storyboards {
    height: 62px;
    background: #f1f1f1;
    color: #222;
}

.storyboards .panel-head {
    color: #e3e6ea;
    border-bottom: 1px solid #0d1015;
}

.storyboards .panel-head .menu {
    margin-right: 4px;
}

.story-tools {
    height: 25px;
    display: flex;
    align-items: flex-end;
    border-bottom: 1px solid #bdbdbd;
}

.story-tab {
    width: 56px;
    height: 15px;
    border: 1px solid #5a6f9c;
    border-left: none;
    border-bottom: none;
    background: #fff;
    font-size: 10px;
    line-height: 16px;
    letter-spacing: -0.3px;
}

.story-add {
    width: 14px;
    height: 11px;
    margin-left: 2px;
    background: #7b7b7b;
    color: #fff;
    font: bold 12px/11px "Liberation Sans", sans-serif;
    text-align: center;
}

.playback {
    display: flex;
    align-items: center;
    height: 23px;
    margin-left: 502px;
}

.playback svg {
    height: 10px;
}

.p-first { width: 10px; }
.p-play { width: 17px; margin-left: 18px; }
.p-back { width: 17px; margin-left: 21px; }
.p-last { width: 10px; margin-left: 13px; }

.zoom-bar {
    width: 77px;
    height: 13px;
    margin-left: auto;
    background: #cacaca;
}

.timeline {
    height: 21px;
    display: flex;
    border-bottom: 1px solid #f8f8f8;
}

.time {
    width: 121px;
    border-left: 1px solid #999;
    text-align: center;
    line-height: 23px;
    letter-spacing: -0.3px;
}

.time-icon {
    width: 14px;
    padding: 2px 0 0;
}

.time-icon svg {
    width: 10px;
    height: 11px;
}

.ruler {
    position: relative;
    flex: 1;
    display: flex;
    overflow: hidden;
    background: #fff;
}

.ruler span {
    flex: none;
    width: 26.667px;
    height: 11px;
    padding-left: 2px;
    border-left: 1px solid #666;
    color: #777;
    font: 9px/14px "Liberation Sans", sans-serif;
    background:
        linear-gradient(#999, #999) 12.3px 0 / 1px 7px no-repeat,
        repeating-linear-gradient(90deg, transparent 0 1.67px, #bdbdbd 1.67px 2.667px) 0 0 / 100% 4px no-repeat;
}

/* played part of the storyboard and the playhead marker */
.played {
    position: absolute;
    left: 0;
    top: 0;
    width: 196px;
    height: 4px;
    background:
        repeating-linear-gradient(90deg, #8ccb74 0 1px, transparent 1px 2.667px) 0 1px / 100% 2px no-repeat,
        #6bb84e;
}

.playhead {
    position: absolute;
    left: 195px;
    top: 0;
    width: 10px;
    height: 20px;
}

/* status bar */
.status {
    height: 21px;
    display: flex;
    align-items: center;
    background: #2e3440;
    border-bottom: 1px solid #4a4a4a;
    border-top: 1px solid #1a1e2c;
}

.ready {
    margin-right: auto;
    padding-left: 1px;
}

.count {
    width: 26px;
    height: 19px;
    padding-left: 7px;
    border-left: 1px solid #c9ccd2;
    line-height: 18px;
}

.ready + .count {
    width: 27px;
}

/* taskbar */
.taskbar {
    height: 39px;
    display: flex;
    align-items: center;
    background: linear-gradient(90deg, #2a2213 0%, #2b2314 70%, #232126 83%, #232126 90%, #2a2315 96%);
}

.start {
    width: 20px;
    height: 20px;
    margin-left: 444px;
}

.task-search {
    width: 183px;
    height: 27px;
    display: flex;
    align-items: center;
    margin-left: 11px;
    padding-left: 10px;
    border: 1px solid #5a5344;
    border-radius: 14px;
    background: #474032;
    color: #e2ded6;
    font-size: 11.5px;
    letter-spacing: -0.4px;
}

.glass {
    width: 13px;
    height: 13px;
    margin-right: 8px;
}

.art {
    width: 42px;
    height: 20px;
    margin-left: auto;
}

.app {
    width: 33px;
    height: 35px;
    display: flex;
    flex-direction: column;
    align-items: center;
    padding-top: 7px;
    border-radius: 4px;
}

.app svg {
    width: 21px;
    height: 21px;
}

.app i {
    width: 5px;
    height: 2px;
    margin-top: 3px;
    border-radius: 1px;
    background: #a8a49b;
}

.a-explorer { margin-left: 4px; }
.a-camtasia { margin-left: 4px; background: #4a222a; }
.a-inventor { margin-left: 4px; background: #3a3123; }
.a-photos { margin-left: 3px; }
.a-calc { margin-left: 4px; }
.a-camtasia i { background: #f09aa4; }
.a-inventor i { width: 13px; background: #ee8a62; }

.inv {
    width: 18px;
    height: 21px;
    background: linear-gradient(135deg, #f0c928, #c89a0a);
    color: #fff;
    font: bold 12px/14px "Liberation Serif", serif;
    text-align: center;
}

.inv small {
    display: block;
    background: #6b4f08;
    font: bold 5px/6px "Liberation Sans", sans-serif;
}

.tray {
    display: flex;
    align-items: center;
    margin: 0 17px 0 auto;
    color: #fff;
    line-height: 13px;
}

.t-up { width: 10px; height: 6px; }
.t-cloud { width: 14px; height: 12px; margin-left: 15px; }
.t-wifi { width: 14px; height: 12px; margin-left: 14px; }
.t-sound { width: 14px; height: 12px; margin-left: 6px; }
.t-batt { width: 14px; height: 10px; margin-left: 6px; }
.t-bell { width: 12px; height: 14px; margin-left: 7px; }

.lang {
    width: 22px;
    margin-left: 15px;
    text-align: center;
    letter-spacing: -0.3px;
}

.clock {
    width: 53px;
    margin-left: 12px;
    text-align: right;
    letter-spacing: -0.25px;
}
```
